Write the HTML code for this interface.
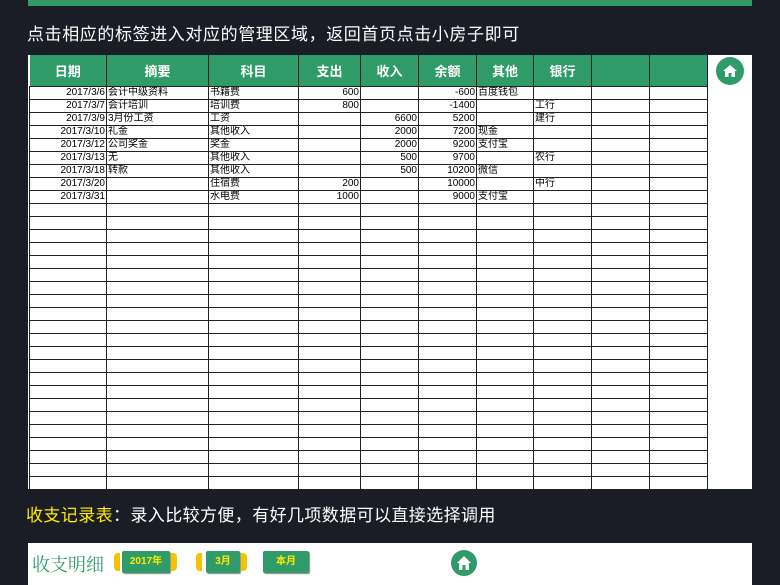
<!DOCTYPE html>
<html><head><meta charset="utf-8"><style>
*{margin:0;padding:0;box-sizing:border-box}
body{width:780px;height:585px;overflow:hidden;background:#1b1d26;font-family:"Liberation Sans","Noto Sans CJK SC",sans-serif;position:relative}
.topbar{position:absolute;left:28px;top:0;width:724px;height:6px;background:#2f9b68}
.title{position:absolute;left:27px;top:20px;color:#fff;font-size:17px;letter-spacing:0.6px}
.panel{position:absolute;left:28px;top:55px;width:724px;height:434px;background:#fff}
table{position:absolute;left:1px;top:0;border-collapse:collapse;table-layout:fixed}
th{background:#2f9b68;color:#fff;font-size:13px;height:31px;border-right:1px solid #222;font-weight:bold}
tr.d td{height:13px}
td{border:1px solid #222;font-size:10px;line-height:11px;padding:0 1px;white-space:nowrap;overflow:hidden;font-family:"Liberation Sans","Noto Sans CJK SC",sans-serif}
td.r{text-align:right}
.home{position:absolute;left:716px;top:57px;width:28px;height:28px}
.sub{position:absolute;left:26px;top:501px;font-size:17px;color:#fff;letter-spacing:0.4px}
.sub b{color:#ffeb00;font-weight:normal}
.p2{position:absolute;left:28px;top:543px;width:724px;height:42px;background:#fff}
.mx{position:absolute;left:4px;top:8px;color:#2f9b68;font-size:18px;font-family:"Noto Serif CJK SC",serif}
.btn{position:absolute;top:8px;height:22px;background:#2f9b68;color:#ffeb00;font-size:10px;font-weight:bold;text-align:center;line-height:22px;border-radius:2px;box-shadow:1px 1px 1px #888}
.arr{position:absolute;top:10px;width:6px;height:18px;background:#f5c400}
</style></head><body>
<div class="topbar"></div>
<div class="title">点击相应的标签进入对应的管理区域，返回首页点击小房子即可</div>
<div class="panel">
<table>
<colgroup><col style="width:77px"><col style="width:102px"><col style="width:90px"><col style="width:62px"><col style="width:58px"><col style="width:58px"><col style="width:57px"><col style="width:58px"><col style="width:58px"><col style="width:58px"></colgroup>
<tr><th>日期</th><th>摘要</th><th>科目</th><th>支出</th><th>收入</th><th>余额</th><th>其他</th><th>银行</th><th></th><th></th></tr>
<tr class="d"><td class="r">2017/3/6</td><td>会计中级资料</td><td>书籍费</td><td class="r">600</td><td></td><td class="r">-600</td><td>百度钱包</td><td></td><td></td><td></td></tr>
<tr class="d"><td class="r">2017/3/7</td><td>会计培训</td><td>培训费</td><td class="r">800</td><td></td><td class="r">-1400</td><td></td><td>工行</td><td></td><td></td></tr>
<tr class="d"><td class="r">2017/3/9</td><td>3月份工资</td><td>工资</td><td></td><td class="r">6600</td><td class="r">5200</td><td></td><td>建行</td><td></td><td></td></tr>
<tr class="d"><td class="r">2017/3/10</td><td>礼金</td><td>其他收入</td><td></td><td class="r">2000</td><td class="r">7200</td><td>现金</td><td></td><td></td><td></td></tr>
<tr class="d"><td class="r">2017/3/12</td><td>公司奖金</td><td>奖金</td><td></td><td class="r">2000</td><td class="r">9200</td><td>支付宝</td><td></td><td></td><td></td></tr>
<tr class="d"><td class="r">2017/3/13</td><td>无</td><td>其他收入</td><td></td><td class="r">500</td><td class="r">9700</td><td></td><td>农行</td><td></td><td></td></tr>
<tr class="d"><td class="r">2017/3/18</td><td>转款</td><td>其他收入</td><td></td><td class="r">500</td><td class="r">10200</td><td>微信</td><td></td><td></td><td></td></tr>
<tr class="d"><td class="r">2017/3/20</td><td></td><td>住宿费</td><td class="r">200</td><td></td><td class="r">10000</td><td></td><td>中行</td><td></td><td></td></tr>
<tr class="d"><td class="r">2017/3/31</td><td></td><td>水电费</td><td class="r">1000</td><td></td><td class="r">9000</td><td>支付宝</td><td></td><td></td><td></td></tr>
<tr class="d"><td></td><td></td><td></td><td></td><td></td><td></td><td></td><td></td><td></td><td></td></tr>
<tr class="d"><td></td><td></td><td></td><td></td><td></td><td></td><td></td><td></td><td></td><td></td></tr>
<tr class="d"><td></td><td></td><td></td><td></td><td></td><td></td><td></td><td></td><td></td><td></td></tr>
<tr class="d"><td></td><td></td><td></td><td></td><td></td><td></td><td></td><td></td><td></td><td></td></tr>
<tr class="d"><td></td><td></td><td></td><td></td><td></td><td></td><td></td><td></td><td></td><td></td></tr>
<tr class="d"><td></td><td></td><td></td><td></td><td></td><td></td><td></td><td></td><td></td><td></td></tr>
<tr class="d"><td></td><td></td><td></td><td></td><td></td><td></td><td></td><td></td><td></td><td></td></tr>
<tr class="d"><td></td><td></td><td></td><td></td><td></td><td></td><td></td><td></td><td></td><td></td></tr>
<tr class="d"><td></td><td></td><td></td><td></td><td></td><td></td><td></td><td></td><td></td><td></td></tr>
<tr class="d"><td></td><td></td><td></td><td></td><td></td><td></td><td></td><td></td><td></td><td></td></tr>
<tr class="d"><td></td><td></td><td></td><td></td><td></td><td></td><td></td><td></td><td></td><td></td></tr>
<tr class="d"><td></td><td></td><td></td><td></td><td></td><td></td><td></td><td></td><td></td><td></td></tr>
<tr class="d"><td></td><td></td><td></td><td></td><td></td><td></td><td></td><td></td><td></td><td></td></tr>
<tr class="d"><td></td><td></td><td></td><td></td><td></td><td></td><td></td><td></td><td></td><td></td></tr>
<tr class="d"><td></td><td></td><td></td><td></td><td></td><td></td><td></td><td></td><td></td><td></td></tr>
<tr class="d"><td></td><td></td><td></td><td></td><td></td><td></td><td></td><td></td><td></td><td></td></tr>
<tr class="d"><td></td><td></td><td></td><td></td><td></td><td></td><td></td><td></td><td></td><td></td></tr>
<tr class="d"><td></td><td></td><td></td><td></td><td></td><td></td><td></td><td></td><td></td><td></td></tr>
<tr class="d"><td></td><td></td><td></td><td></td><td></td><td></td><td></td><td></td><td></td><td></td></tr>
<tr class="d"><td></td><td></td><td></td><td></td><td></td><td></td><td></td><td></td><td></td><td></td></tr>
<tr class="d"><td></td><td></td><td></td><td></td><td></td><td></td><td></td><td></td><td></td><td></td></tr>
<tr class="d"><td></td><td></td><td></td><td></td><td></td><td></td><td></td><td></td><td></td><td></td></tr>
</table>
</div>
<svg class="home" viewBox="0 0 28 28"><circle cx="14" cy="14" r="14" fill="#2f9b68"/><path d="M7 14 L14 8 L21 14 L19 14 L19 20 L15.5 20 L15.5 16 L12.5 16 L12.5 20 L9 20 L9 14 Z" fill="#fff"/></svg>
<div class="sub"><b>收支记录表</b>：录入比较方便，有好几项数据可以直接选择调用</div>
<div class="p2">
<div class="mx">收支明细</div>
<div class="arr" style="left:86px;border-radius:4px 0 0 4px"></div>
<div class="btn" style="left:94px;width:48px">2017年</div>
<div class="arr" style="left:143px;border-radius:0 4px 4px 0"></div>
<div class="arr" style="left:168px;border-radius:4px 0 0 4px"></div>
<div class="btn" style="left:178px;width:34px">3月</div>
<div class="arr" style="left:213px;border-radius:0 4px 4px 0"></div>
<div class="btn" style="left:235px;width:46px">本月</div>
<svg style="position:absolute;left:422px;top:6px" width="28" height="28" viewBox="0 0 28 28"><circle cx="14" cy="14" r="13" fill="#2f9b68"/><path d="M7 14 L14 7 L21 14 L19 14 L19 21 L15.5 21 L15.5 16 L12.5 16 L12.5 21 L9 21 L9 14 Z" fill="#fff"/></svg>
</div>
</body></html>
